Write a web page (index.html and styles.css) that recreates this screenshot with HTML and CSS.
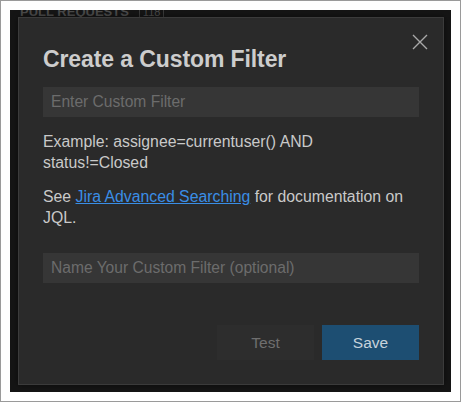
FILE: index.html
```html
<!DOCTYPE html>
<html>
<head>
<meta charset="utf-8">
<link rel="stylesheet" href="styles.css">
</head>
<body>
<div class="frame">
  <div class="backdrop">
    <div class="behind"><span class="behind-title">PULL REQUESTS</span><span class="behind-badge">118</span></div>
    <div class="modal">
      <button class="close" aria-label="Close">
        <svg width="16" height="16" viewBox="0 0 16 16"><path d="M1 1 L15 15 M15 1 L1 15" stroke="#a9a9a9" stroke-width="1.4" fill="none"/></svg>
      </button>
      <h1 class="title">Create a Custom Filter</h1>
      <input class="field" type="text" placeholder="Enter Custom Filter">
      <p class="text p1">Example: assignee=currentuser() AND status!=Closed</p>
      <p class="text p2">See <a class="link" href="#">Jira Advanced Searching</a> for documentation on JQL.</p>
      <input class="field field2" type="text" placeholder="Name Your Custom Filter (optional)">
      <div class="actions">
        <button class="btn btn-test">Test</button>
        <button class="btn btn-save">Save</button>
      </div>
    </div>
  </div>
</div>
</body>
</html>
```
FILE: styles.css
```css
* { box-sizing: border-box; }
html, body { margin: 0; padding: 0; background: #ffffff; }
body { font-family: "Liberation Sans", Arial, sans-serif; }

.frame {
  width: 461px;
  height: 402px;
  border: 1px solid #9a9a9a;
  padding: 9px;
  background: #ffffff;
}

.backdrop {
  position: relative;
  width: 100%;
  height: 100%;
  background: #151515;
  padding: 7px 7px 7px 8px;
  overflow: hidden;
}

.behind {
  position: absolute;
  left: 10px;
  top: -6px;
  display: flex;
  gap: 10px;
  align-items: center;
  color: #4a4a4a;
  font-weight: bold;
  font-size: 13px;
  line-height: 14px;
}
.behind-badge {
  border: 1px solid #3a3a3a;
  padding: 0 3px;
  font-weight: normal;
  font-size: 11px;
}

.modal {
  position: relative;
  height: 100%;
  background: #2a2a2a;
  border: 1px solid #3b3b3b;
  padding: 27px 24px 0 24px;
  display: flex;
  flex-direction: column;
  box-shadow: 0 0 6px rgba(0,0,0,0.5);
}

.close {
  position: absolute;
  top: 16px;
  right: 15px;
  width: 16px;
  height: 16px;
  padding: 0;
  border: 0;
  background: transparent;
  display: flex;
}

.title {
  margin: 0;
  font-size: 23px;
  line-height: 28px;
  font-weight: bold;
  color: #cdcdcd;
  letter-spacing: -0.1px;
}

.field {
  margin: 14px 0 0 0;
  height: 30px;
  width: 100%;
  border: 0;
  background: #363636;
  padding: 0 8px;
  font-family: "Liberation Sans", Arial, sans-serif;
  font-size: 15.6px;
  color: #cccccc;
  outline: none;
}
.field::placeholder { color: #6c6c6c; }
.field2 { margin-top: 25px; }

.text {
  margin: 0;
  font-size: 15.8px;
  line-height: 21px;
  color: #c9c9c9;
}
.p1 { margin-top: 14px; padding-right: 90px; }
.p2 { margin-top: 13px; }
.link { color: #3a8ee6; text-decoration: underline; }

.actions {
  margin-top: 42px;
  display: flex;
  justify-content: flex-end;
  gap: 8px;
}
.btn {
  width: 97px;
  height: 35px;
  border: 0;
  font-family: "Liberation Sans", Arial, sans-serif;
  font-size: 15.5px;
  padding: 0;
}
.btn-test { background: #2d2d2d; color: #6f6f6f; }
.btn-save { background: #1d4e72; color: #c6d3dc; }
```
